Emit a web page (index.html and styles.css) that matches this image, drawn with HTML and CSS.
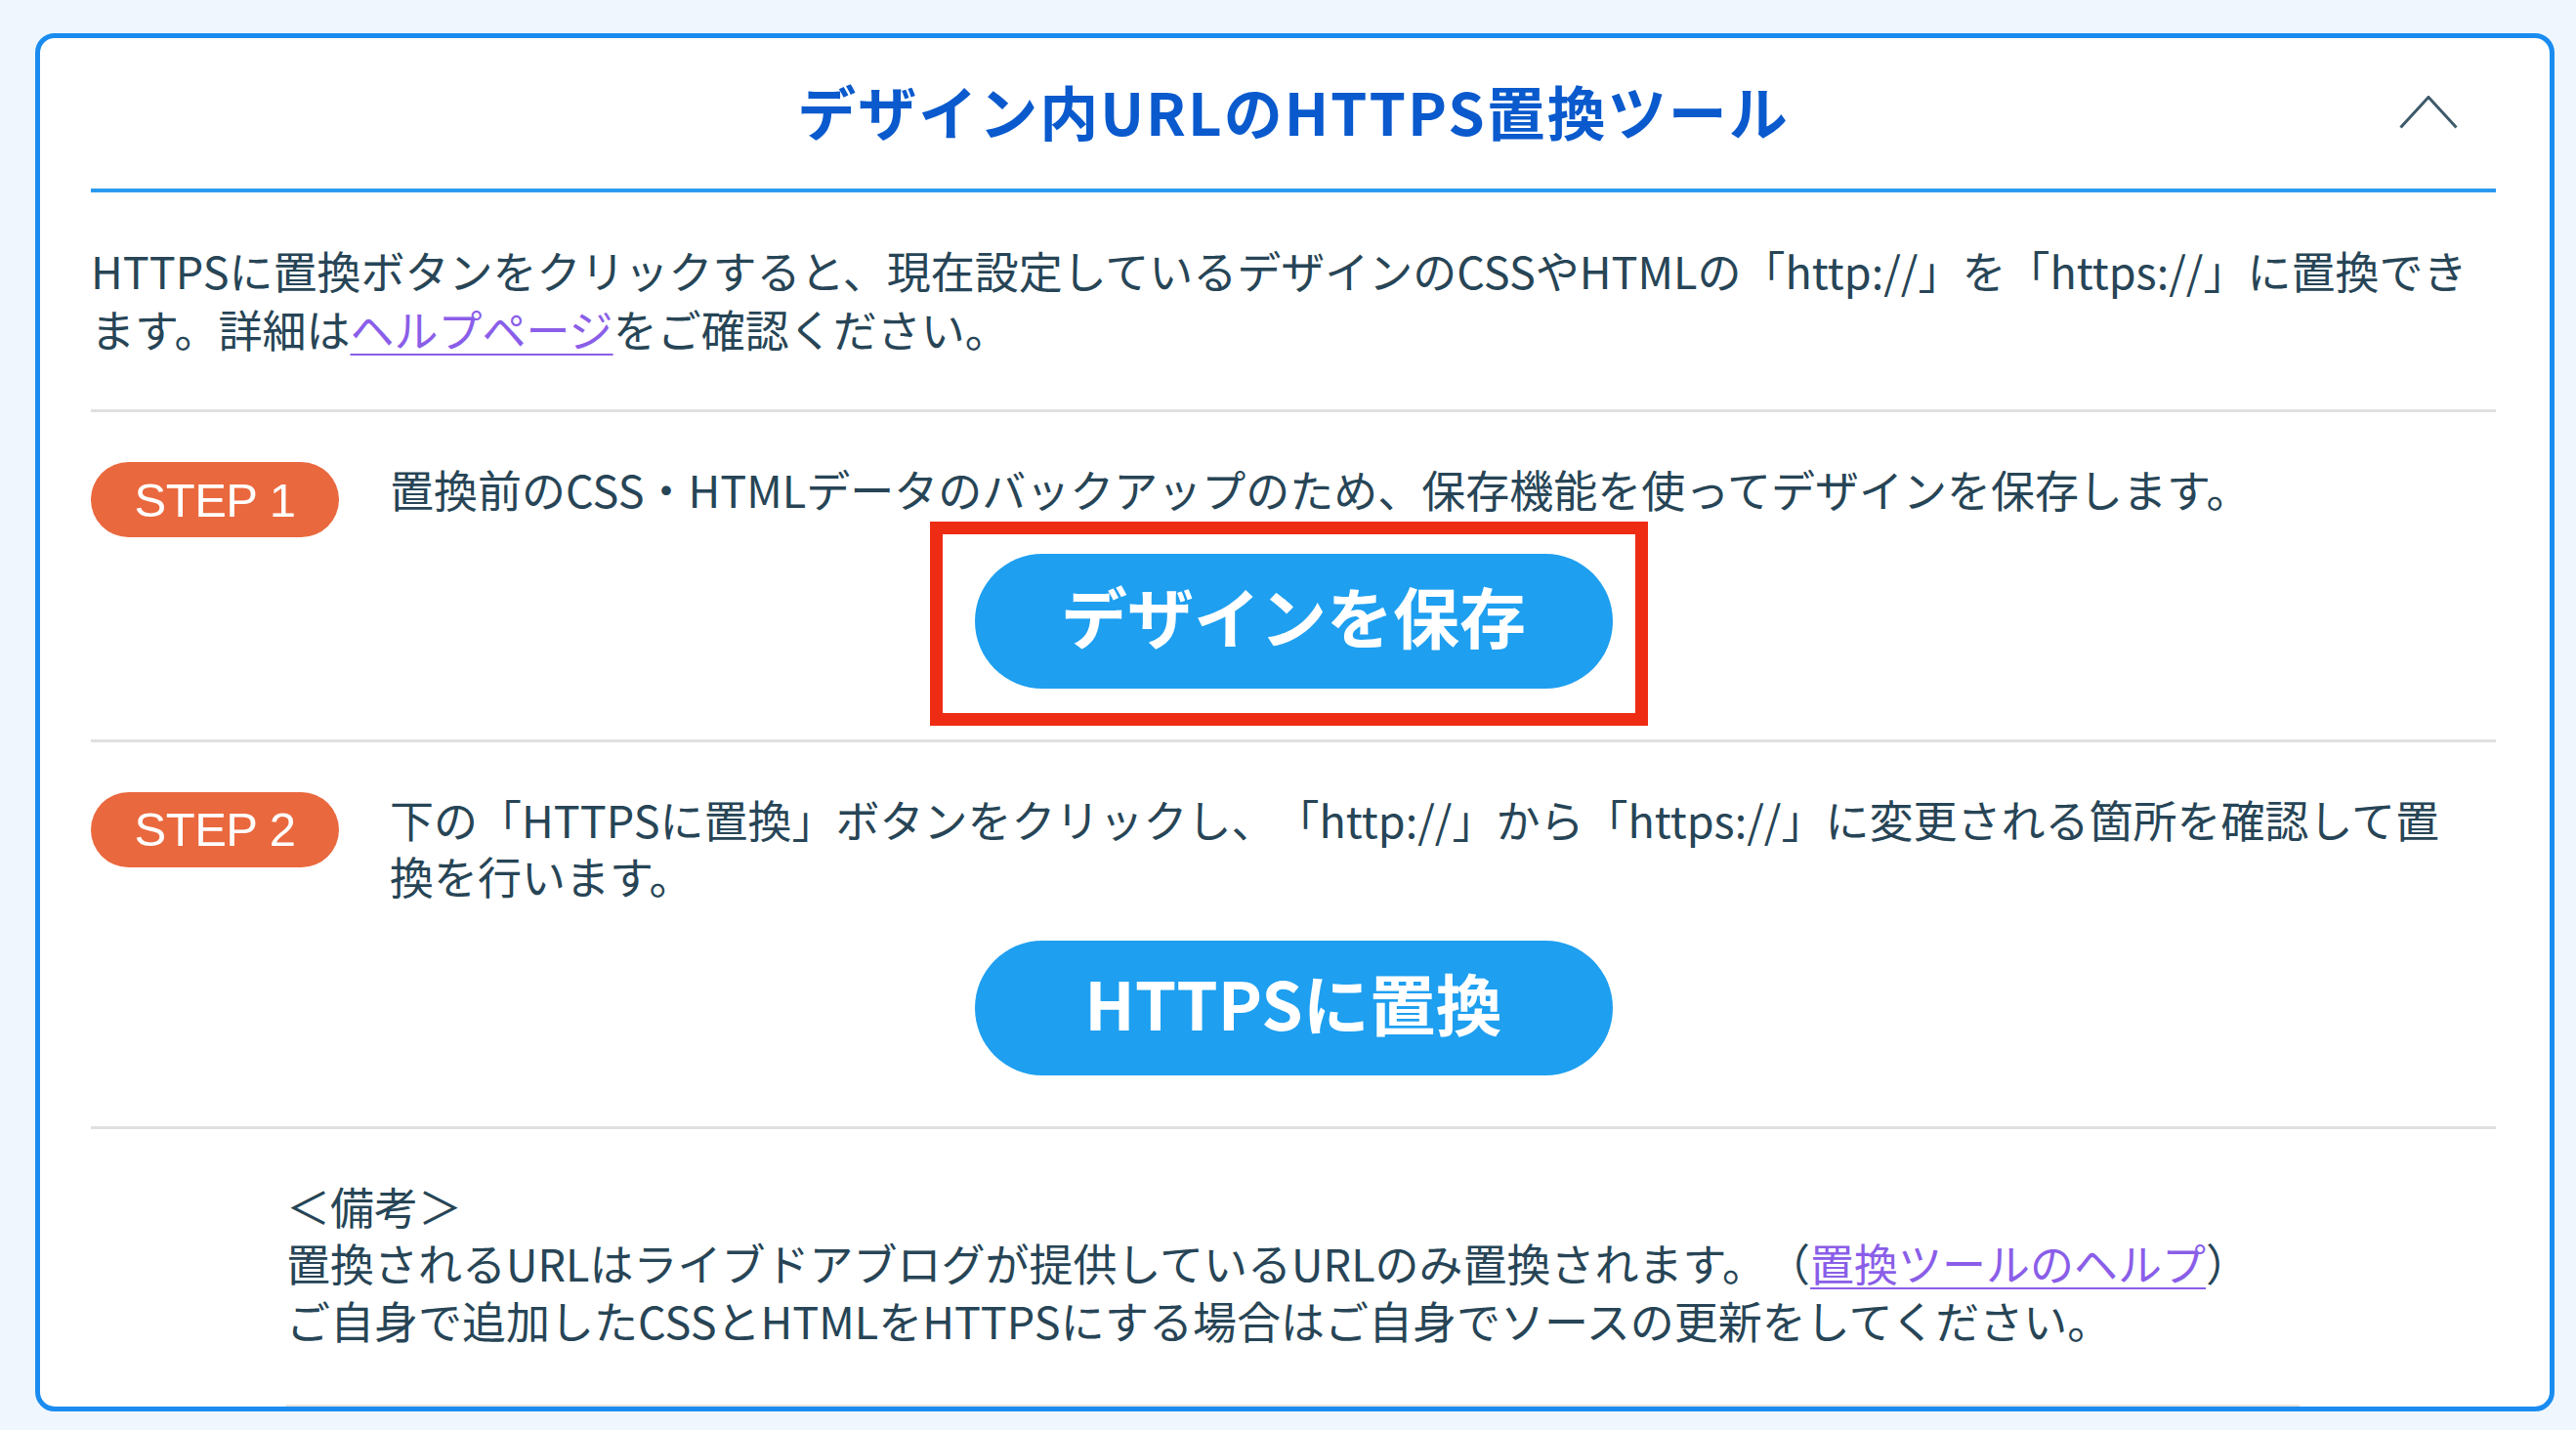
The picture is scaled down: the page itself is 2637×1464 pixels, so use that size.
FILE: index.html
```html
<!DOCTYPE html>
<html lang="ja">
<head>
<meta charset="utf-8">
<title>デザイン内URLのHTTPS置換ツール</title>
<link rel="stylesheet" href="styles.css">
</head>
<body>
<section class="card">
  <header class="card-head">
    <span class="head-spacer"></span>
    <h1 class="card-title">デザイン内URLのHTTPS置換ツール</h1>
    <span class="toggle" aria-label="閉じる">
      <svg class="chevron" viewBox="0 0 60 34" width="60" height="34"><polyline points="1.5,32.5 30,1.5 58.5,32.5" fill="none" stroke="#3e5a6a" stroke-width="3"/></svg>
    </span>
  </header>

  <p class="intro">HTTPSに置換ボタンをクリックすると、現在設定しているデザインのCSSやHTMLの「http://」を「https://」に置換できます。詳細は<a class="link" href="#">ヘルプページ</a>をご確認ください。</p>

  <div class="step">
    <div class="step-row">
      <span class="badge">STEP 1</span>
      <p class="step-text">置換前のCSS・HTMLデータのバックアップのため、保存機能を使ってデザインを保存します。</p>
    </div>
    <div class="actions">
      <span class="btn-wrap">
        <button class="btn">デザインを保存</button>
        <span class="highlight"></span>
      </span>
    </div>
  </div>

  <div class="step">
    <div class="step-row">
      <span class="badge">STEP 2</span>
      <p class="step-text">下の「HTTPSに置換」ボタンをクリックし、「http://」から「https://」に変更される箇所を確認して置換を行います。</p>
    </div>
    <div class="actions">
      <span class="btn-wrap">
        <button class="btn">HTTPSに置換</button>
      </span>
    </div>
  </div>

  <div class="notes">
    <p class="note-line">＜備考＞</p>
    <p class="note-line">置換されるURLはライブドアブログが提供しているURLのみ置換されます。（<a class="link" href="#">置換ツールのヘルプ</a>）</p>
    <p class="note-line">ご自身で追加したCSSとHTMLをHTTPSにする場合はご自身でソースの更新をしてください。</p>
  </div>
</section>
</body>
</html>
```

FILE: styles.css
```css
html, body {
  margin: 0;
  padding: 0;
}

body {
  background: #eff6fe;
  font-family: "Noto Sans CJK JP", "Noto Sans", sans-serif;
  color: #274556;
  padding: 34px 22px 0 36px;
  text-spacing-trim: space-all;
}

.card {
  background: #ffffff;
  border: 5px solid #1a8cf0;
  border-radius: 20px;
  padding: 0 55px 0 52px;
  height: 1401px;
  box-sizing: content-box;
  overflow: hidden;
}

.card-head {
  display: grid;
  grid-template-columns: 1fr auto 1fr;
  align-items: center;
  padding: 44px 0 50px;
  border-bottom: 4px solid #2a9af0;
}

.card-title {
  margin: 0;
  font-size: 60px;
  line-height: 60px;
  font-weight: 700;
  color: #0a5acd;
  letter-spacing: 2px;
  white-space: nowrap;
}

.toggle {
  justify-self: end;
  margin-right: 39px;
  display: flex;
  padding-top: 4px;
}

.chevron {
  display: block;
}

.intro {
  margin: 0;
  padding: 50px 0 52px;
  font-size: 45px;
  line-height: 60px;
  border-bottom: 3px solid #e0e0e0;
}

.link {
  color: #8a5ee8;
  text-decoration: underline;
  text-underline-offset: 6px;
  text-decoration-thickness: 2px;
}

.step {
  padding: 50px 0 52px;
  border-bottom: 3px solid #e0e0e0;
}

.step-row {
  display: flex;
  align-items: flex-start;
}

.badge {
  flex: 0 0 auto;
  width: 254px;
  height: 77px;
  margin-top: 1px;
  margin-right: 52px;
  margin-bottom: -20px;
  border-radius: 39px;
  background: #ea683e;
  color: #ffffff;
  font-family: "Liberation Sans", Arial, sans-serif;
  font-size: 49px;
  letter-spacing: -0.5px;
  display: flex;
  align-items: center;
  justify-content: center;
}

.step-text {
  margin: 0;
  flex: 1 1 auto;
  font-size: 45px;
  line-height: 58.5px;
  padding-right: 40px;
}

.actions {
  margin-top: 36px;
  display: flex;
  justify-content: center;
}

.btn-wrap {
  position: relative;
  display: inline-block;
}

.btn {
  display: flex;
  align-items: center;
  justify-content: center;
  width: 653px;
  height: 138px;
  border: 0;
  border-radius: 69px;
  background: #1e9ff0;
  color: #ffffff;
  font-family: "Noto Sans CJK JP", sans-serif;
  font-size: 68px;
  font-weight: 700;
  padding: 0 0 12px;
}

.highlight {
  position: absolute;
  left: -46px;
  top: -33px;
  right: -36px;
  bottom: -38px;
  border: 13px solid #ee2c14;
  pointer-events: none;
}

.notes {
  margin-left: 200px;
  width: 2061px;
  padding: 50px 0 57px;
  border-bottom: 2px solid #ece4dc;
}

.note-line {
  margin: 0;
  font-size: 45px;
  line-height: 58.5px;
}
```
